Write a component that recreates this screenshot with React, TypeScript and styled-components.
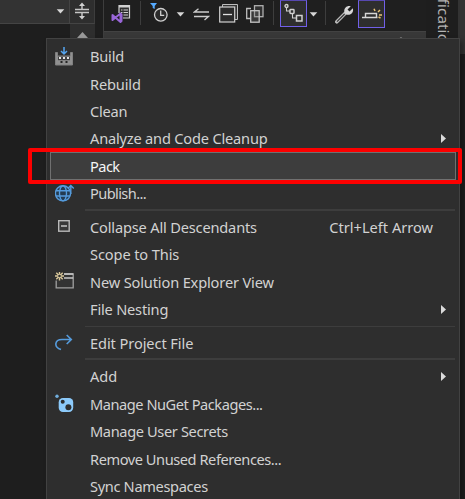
import React from "react";
import styled, { createGlobalStyle, css } from "styled-components";

const GlobalStyle = createGlobalStyle`
  * { box-sizing: border-box; }
  html, body { margin: 0; overflow: hidden; background: #1e1e1e; }
  body { font-family: "Noto Sans", "Open Sans", sans-serif; }
  svg { display: block; flex: none; }
`;

const Window = styled.div`
  position: relative;
  display: flex;
  width: 465px;
  height: 499px;
  overflow: hidden;
  background: #1e1e1e;
`;

const Editor = styled.section`
  display: grid;
  grid-template-columns: 70px 25px;
  grid-template-rows: 24px 1fr;
  width: 95px;
`;

const Combo = styled.div`
  display: flex;
  justify-content: flex-end;
  padding: 9px 4px 0 0;
  background: #333333;
  border-right: 1px solid #444444;
  border-bottom: 1px solid #444444;
`;

const SplitHandle = styled.div`
  display: flex;
  justify-content: center;
  padding-top: 2px;
  background: #2e2e2e;
  border-right: 1px solid #3d3d3d;
  border-bottom: 1px solid #444444;
`;

const CodeArea = styled.div`
  background: #1e1e1e;
`;

const ScrollBar = styled.div`
  display: flex;
  justify-content: center;
  padding-top: 8px;
  background: #2e2e2e;
`;

const Explorer = styled.section`
  width: 323px;
  margin-left: 8px;
  border-left: 1px solid #3d3d3d;
`;

const Toolbar = styled.div`
  display: flex;
  height: 31px;
  background: #1f1f1f;
`;

const Tool = styled.div<{ $left?: number; $top?: number }>`
  margin-left: ${(p) => p.$left ?? 0}px;
  padding-top: ${(p) => p.$top ?? 0}px;
`;

const Toggle = styled.div<{ $left: number; $height: number }>`
  width: 27px;
  height: ${(p) => p.$height}px;
  margin-left: ${(p) => p.$left}px;
  padding: 2px 0 0 3px;
  background: #2e2e2e;
  border: 1px solid #7160e8;
  border-top-color: #5748b0;
`;

const Divider = styled.div<{ $left: number }>`
  width: 1px;
  height: 24px;
  margin: 1px 0 0 ${(p) => p.$left}px;
  background: #3d3d3d;
`;

const SearchStrip = styled.div`
  display: flex;
  justify-content: flex-end;
  height: 8px;
  padding: 5px 20px 0 0;
  background: #383838;
  border-top: 1px solid #424242;
`;

const SideTabs = styled.aside`
  width: 32px;
  height: 499px;
  padding-left: 9px;
  overflow: hidden;
  background: #1e1e1e;
`;

const SideLabel = styled.div`
  margin-top: -32px;
  color: #b4b4b4;
  font-size: 15px;
  letter-spacing: 0.2px;
  line-height: 18px;
  white-space: nowrap;
  writing-mode: vertical-rl;
`;

const Edge = styled.div`
  width: 7px;
  height: 54px;
  background: #333333;
`;

const Menu = styled.div`
  position: absolute;
  top: 38px;
  left: 46px;
  width: 414px;
  height: 470px;
  padding: 3.4px 3px 0;
  background: #2e2e2e;
  border: 1px solid #424242;
  box-shadow: 3px 3px 5px rgba(0, 0, 0, 0.35);
`;

const Row = styled.div<{ $active?: boolean }>`
  display: grid;
  grid-template-columns: 40px 1fr auto;
  align-items: center;
  height: 27.43px;
  padding-right: 10px;
  color: #d2d2d2;
  font-size: 14.6px;
  line-height: 20px;
  white-space: nowrap;
  ${(p) =>
    p.$active &&
    css`
      color: #f5f5f5;
      background: #3d3d3d;
      box-shadow: inset 0 0 0 1px #707070;
    `}
`;

const IconSlot = styled.span`
  display: flex;
  padding-left: 5px;
`;

const Label = styled.span<{ $tracking: number }>`
  letter-spacing: ${(p) => p.$tracking}px;
`;

const Shortcut = styled.span`
  padding-right: 13px;
`;

const Separator = styled.hr<{ $thick?: boolean }>`
  height: ${(p) => (p.$thick ? 2 : 1)}px;
  margin: ${(p) => (p.$thick ? "2.2px" : "2.7px")} 1px 2.2px 35px;
  border: 0;
  background: #3d3d3d;
`;

const Highlight = styled.div`
  position: absolute;
  top: 148px;
  left: 28px;
  width: 433.5px;
  height: 36px;
  border: 4px solid #fd0000;
  border-radius: 2px;
`;

const Caret = () => (
  <svg width="9" height="5" viewBox="0 0 9 5">
    <path d="M.7.3h7.6L4.5 4.4z" fill="#d6d6d6" />
  </svg>
);

const SubmenuArrow = () => (
  <svg width="5" height="9" viewBox="0 0 5 9">
    <path d="M0 0v9l5-4.5z" fill="#dadada" />
  </svg>
);

const SplitIcon = () => (
  <svg width="16" height="18" viewBox="0 0 16 18">
    <path d="M1 7.5h14M1 10.5h14" stroke="#c5c5c5" strokeWidth="1.5" />
    <path d="M8 7V3M8 11v4" stroke="#d0d0d0" strokeWidth="1.4" />
    <path d="M8 .5 5 4h6zM8 17.5 5 14h6z" fill="#d0d0d0" />
  </svg>
);

const VsIcon = () => (
  <svg width="20" height="20" viewBox="0 0 20 20">
    <path d="M8 9V1.5h10.5v12.5H12" fill="#2e2e2e" stroke="#d0d0d0" strokeWidth="1.2" />
    <path d="M8 2.5h10.5" stroke="#d0d0d0" strokeWidth="2" />
    <path d="M10 6h1.5m1 0H17M10 8.5h1.5m1 0H17M12.5 11H17" stroke="#d0d0d0" />
    <path d="m1.5 11 8 7V9.5l-8 6.5z" fill="none" stroke="#9966d8" strokeWidth="2" strokeLinejoin="round" />
    <path d="M9 8.5 11.5 10v7.5L9 19z" fill="#9966d8" />
  </svg>
);

const ClockIcon = () => (
  <svg width="19" height="20" viewBox="0 0 19 20">
    <path d="M0 0h7L4.7 3v3l-2-1V3z" fill="#55aaff" />
    <circle cx="10.8" cy="11.8" r="6.3" fill="#2a2a2a" stroke="#d0d0d0" strokeWidth="1.3" />
    <path d="M10.7 7.5v4.8h3.5" fill="none" stroke="#d0d0d0" strokeWidth="1.3" />
  </svg>
);

const SyncIcon = () => (
  <svg width="17" height="13" viewBox="0 0 17 13">
    <path d="M16 4H1.5L5.5.8M1 8.5h14.5l-4 3.5" fill="none" stroke="#cccccc" strokeWidth="1.35" />
  </svg>
);

const CollapseIcon = () => (
  <svg width="19" height="19" viewBox="0 0 19 19">
    <path d="M3.5 3.5v-3h15v15h-3" fill="#333333" stroke="#bdbdbd" />
    <rect x=".7" y="3" width="15" height="15" fill="#2b2b2b" stroke="#d0d0d0" strokeWidth="1.2" />
    <path d="M4 10.5h9" stroke="#e0e0e0" strokeWidth="1.3" />
  </svg>
);

const PagesIcon = () => (
  <svg width="18" height="18" viewBox="0 0 18 18">
    <path d="M5 3.5H.7v10H5" fill="none" stroke="#bdbdbd" strokeWidth="1.3" />
    <rect x="8.5" y=".7" width="8.5" height="11" fill="#303030" stroke="#b0b0b0" strokeWidth="1.3" />
    <rect x="4.7" y="5.7" width="8.5" height="11.5" fill="#777" fillOpacity=".3" stroke="#c5c5c5" strokeWidth="1.3" />
  </svg>
);

const NodesIcon = () => (
  <svg width="20" height="21" viewBox="0 0 20 21">
    <path d="M2.5 4v4h4M8.5 10v5h4" fill="none" stroke="#d0d0d0" strokeWidth="1.1" />
    <circle cx="2.5" cy="3" r="1.5" fill="#2e2e2e" stroke="#d0d0d0" strokeWidth="1.4" />
    <rect x="6" y="6.5" width="4" height="4" rx=".7" fill="#2e2e2e" stroke="#d0d0d0" strokeWidth="1.5" />
    <rect x="12.5" y="12.5" width="5.5" height="5.5" fill="#2e2e2e" stroke="#d0d0d0" strokeWidth="1.5" />
  </svg>
);

const WrenchIcon = () => (
  <svg width="19" height="19" viewBox="0 0 19 19">
    <path d="m1.8 16.8 8.7-8.7" stroke="#bdbdbd" strokeWidth="3.5" strokeLinecap="round" />
    <path d="M15.8 1.2 12.5 4.5l2 2 3.3-3.3c1.4 4.2-2.6 7.7-6.5 6.2L9.6 7.7C8.1 3.8 11.6-.1 15.8 1.2z" fill="#d6d6d6" />
    <path d="m2 16.6 7.6-7.6" stroke="#333333" strokeWidth="1.2" />
  </svg>
);

const PreviewIcon = () => (
  <svg width="21" height="20" viewBox="0 0 21 20">
    <path d="M3.5 14.5v-4h11v4M-.5 14.5h16" fill="none" stroke="#d6d6d6" strokeWidth="1.4" />
    <path d="m13 8-1-2.3M16 9l2-2M17 12h3M16.5 14l2 1" stroke="#e8c275" strokeWidth="1.5" />
  </svg>
);

const BuildIcon = () => (
  <svg width="18" height="20" viewBox="0 0 18 20">
    <path d="M.5 6.5V19h17V6.5h-2V10H2.5V6.5z" fill="#909090" stroke="#808080" />
    <path d="M3 10.7h12v3.5H3z" fill="#404040" />
    <path d="M4 11h2v2H4zm4 0h2v2H8zm4 0h2v2h-2z" fill="#e2e2e2" />
    <path d="M5.5 15h2v2h-2zm5 0h2v2h-2z" fill="#252525" />
    <path d="M9 1v7M6 5l3 3 3-3" fill="none" stroke="#55a5ef" strokeWidth="1.5" />
  </svg>
);

const PublishIcon = () => (
  <svg width="20" height="18" viewBox="0 0 20 18">
    <g fill="none" stroke="#559bdc" strokeWidth="1.4">
      <circle cx="8" cy="9.3" r="7.6" fill="#243b50" />
      <ellipse cx="8" cy="9.3" rx="3.5" ry="7.6" />
      <path d="M1 6.8h14M1 12h14" />
      <path d="M15.8 10V2M12.8 4.5l3-3 3 3" />
    </g>
  </svg>
);

const CollapseAllIcon = () => (
  <svg width="18" height="18" viewBox="0 0 18 18">
    <rect x="3.7" y="2.7" width="10.5" height="10.5" fill="#383838" stroke="#b9b9b9" strokeWidth="1.4" />
    <path d="M6 8h6" stroke="#dddddd" strokeWidth="1.3" />
  </svg>
);

const NewViewIcon = () => (
  <svg width="20" height="19" viewBox="0 0 20 19">
    <path d="M1.2 8.5v7.3h17V2H9" fill="#333333" stroke="#a0a0a0" strokeWidth="1.3" />
    <path d="M9 2h9.2M9 6h9.2" stroke="#c8c8c8" strokeWidth="1.7" />
    <path d="M4.5-.5v9M0 4h9M1.3.8l6.4 6.4M1.3 7.2 7.7.8" stroke="#d9c89b" strokeWidth="1.4" />
    <circle cx="4.5" cy="4" r="1.3" fill="#2e2e2e" />
  </svg>
);

const EditIcon = () => (
  <svg width="18" height="17" viewBox="0 0 18 17">
    <path d="M6 15.5C-1.5 13-.5 5.5 7 5.5h9M11.7 1l4.6 4.5-4.6 4.5" fill="none" stroke="#559bdc" strokeWidth="1.6" />
  </svg>
);

const NugetIcon = () => (
  <svg width="20" height="20" viewBox="0 0 20 20">
    <circle cx="2" cy="2.2" r="1.7" fill="#71aedd" />
    <rect x="3.7" y="4" width="14.5" height="14" rx="4.2" fill="#8ccafa" />
    <circle cx="7.7" cy="7.8" r="2" fill="#2e2e2e" />
    <circle cx="13.4" cy="13.3" r="3" fill="#2e2e2e" />
  </svg>
);

type Entry =
  | { kind: "separator"; thick?: boolean }
  | {
      kind?: "item";
      label: string;
      tracking?: number;
      icon?: React.ReactNode;
      shortcut?: string;
      submenu?: boolean;
      active?: boolean;
    };

const entries: Entry[] = [
  { label: "Build", icon: <BuildIcon />, tracking: -0.2 },
  { label: "Rebuild", tracking: -0.15 },
  { label: "Clean", tracking: -0.2 },
  { label: "Analyze and Code Cleanup", submenu: true, tracking: -0.19 },
  { label: "Pack", active: true, tracking: -0.55 },
  { label: "Publish...", icon: <PublishIcon />, tracking: -0.6 },
  { kind: "separator", thick: true },
  { label: "Collapse All Descendants", icon: <CollapseAllIcon />, shortcut: "Ctrl+Left Arrow", tracking: -0.17 },
  { label: "Scope to This", tracking: -0.11 },
  { label: "New Solution Explorer View", icon: <NewViewIcon />, tracking: -0.15 },
  { label: "File Nesting", submenu: true, tracking: -0.19 },
  { kind: "separator" },
  { label: "Edit Project File", icon: <EditIcon />, tracking: -0.08 },
  { kind: "separator", thick: true },
  { label: "Add", submenu: true },
  { label: "Manage NuGet Packages...", icon: <NugetIcon />, tracking: -0.46 },
  { label: "Manage User Secrets", tracking: -0.37 },
  { label: "Remove Unused References...", tracking: -0.44 },
  { label: "Sync Namespaces", tracking: -0.33 },
];

export default function App() {
  return (
    <Window>
      <GlobalStyle />
      <Editor>
        <Combo><Caret /></Combo>
        <SplitHandle><SplitIcon /></SplitHandle>
        <CodeArea />
        <ScrollBar>
          <svg width="11" height="6" viewBox="0 0 11 6"><path d="M0 6 5.5 0 11 6z" fill="#999999" /></svg>
        </ScrollBar>
      </Editor>
      <Explorer>
        <Toolbar>
          <Tool $left={7} $top={4}><VsIcon /></Tool>
          <Divider $left={9} />
          <Tool $left={9} $top={3}><ClockIcon /></Tool>
          <Tool $left={7} $top={12}><Caret /></Tool>
          <Tool $left={8} $top={8}><SyncIcon /></Tool>
          <Tool $left={9} $top={4}><CollapseIcon /></Tool>
          <Tool $left={8} $top={5}><PagesIcon /></Tool>
          <Divider $left={9} />
          <Toggle $left={6} $height={27}><NodesIcon /></Toggle>
          <Tool $left={2} $top={12}><Caret /></Tool>
          <Divider $left={7} />
          <Tool $left={9} $top={5}><WrenchIcon /></Tool>
          <Toggle $left={4} $height={28}><PreviewIcon /></Toggle>
        </Toolbar>
        <SearchStrip>
          <svg width="10" height="3" viewBox="0 0 10 3"><path d="M1 3Q5-2 9 3z" fill="#dddddd" /></svg>
        </SearchStrip>
      </Explorer>
      <SideTabs><SideLabel>Notifications</SideLabel></SideTabs>
      <Edge />
      <Menu role="menu">
        {entries.map((entry, i) =>
          entry.kind === "separator" ? (
            <Separator key={i} $thick={entry.thick} />
          ) : (
            <Row key={i} role="menuitem" $active={entry.active}>
              <IconSlot>{entry.icon}</IconSlot>
              <Label $tracking={entry.tracking ?? 0}>{entry.label}</Label>
              {entry.shortcut && <Shortcut>{entry.shortcut}</Shortcut>}
              {entry.submenu && <SubmenuArrow />}
            </Row>
          )
        )}
      </Menu>
      <Highlight />
    </Window>
  );
}
